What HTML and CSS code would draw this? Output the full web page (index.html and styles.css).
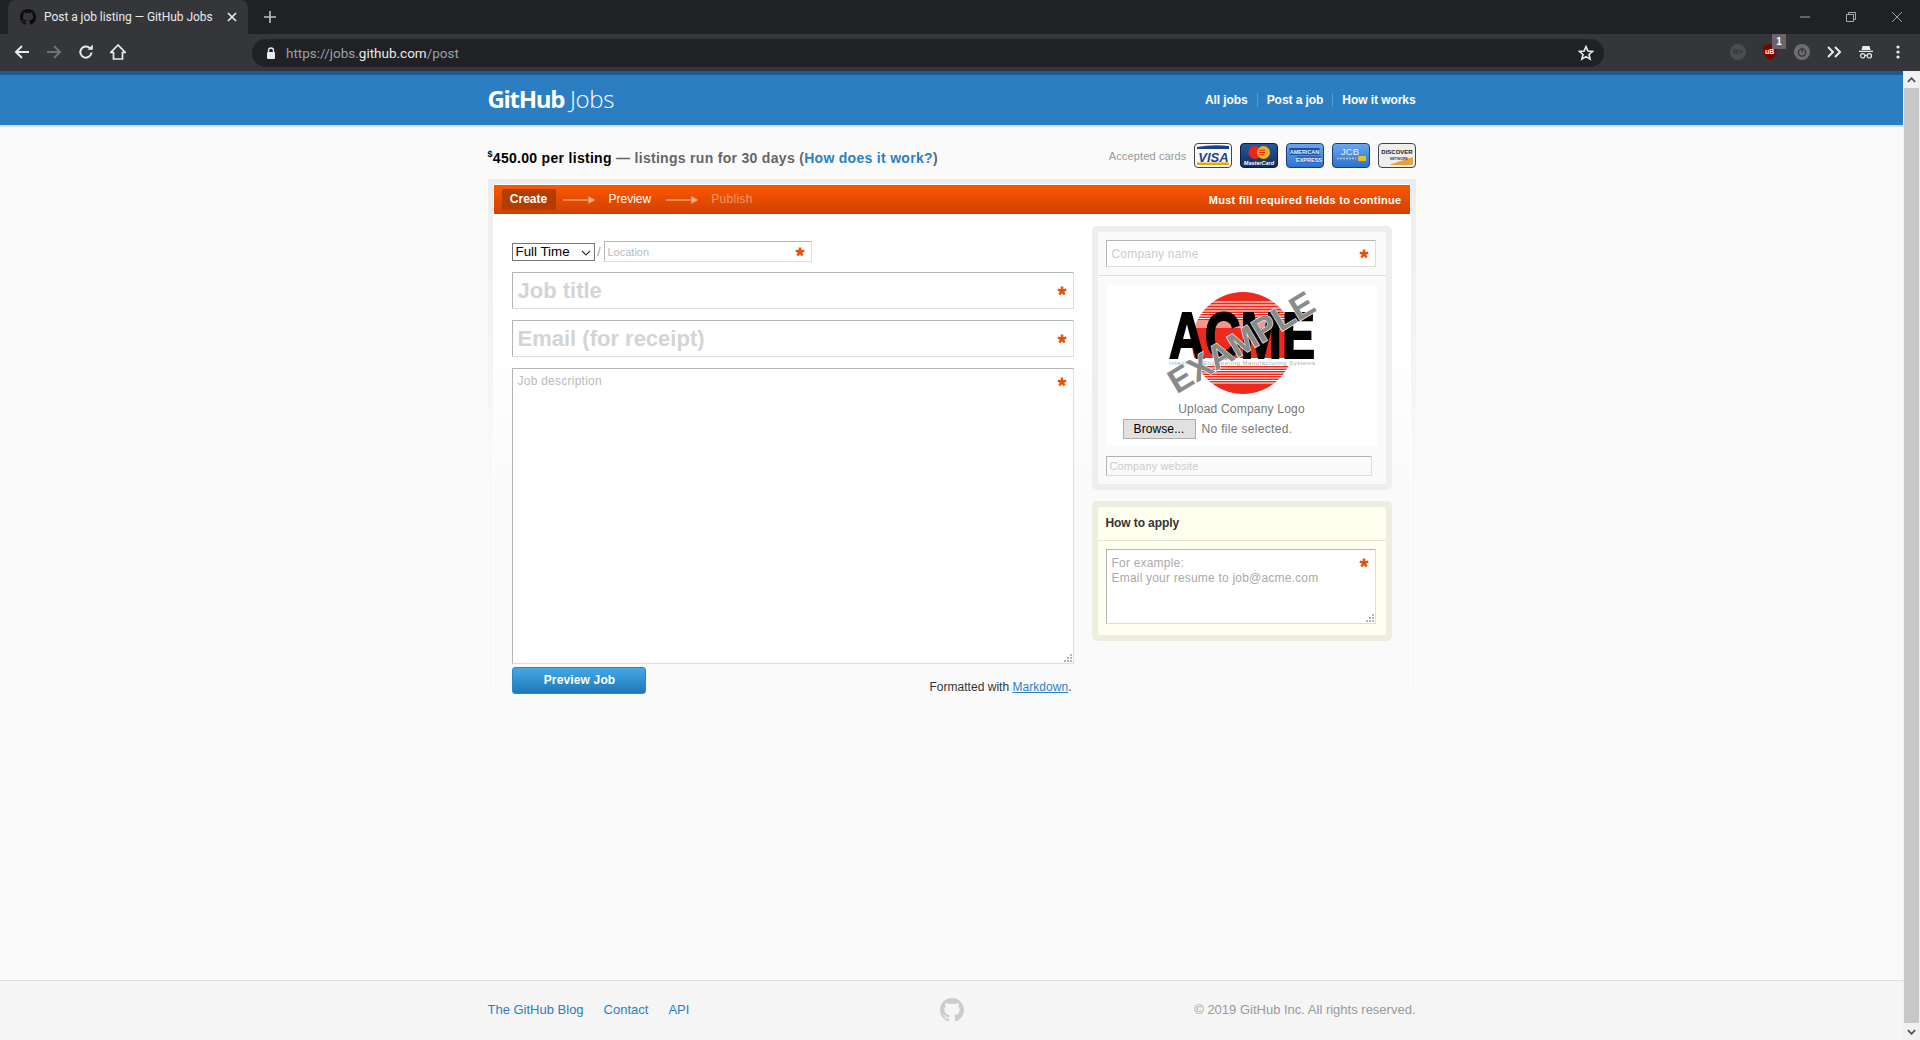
FILE: index.html
```html
<!DOCTYPE html>
<html lang="en">
<head>
<meta charset="utf-8">
<title>Post a job listing — GitHub Jobs</title>
<link rel="stylesheet" href="styles.css">
</head>
<body>
<svg class="defs" width="0" height="0">
  <defs>
    <symbol id="mark" viewBox="0 0 16 16"><path d="M8 0C3.58 0 0 3.58 0 8c0 3.54 2.29 6.53 5.47 7.59.4.07.55-.17.55-.38 0-.19-.01-.82-.01-1.49-2.01.37-2.53-.49-2.69-.94-.09-.23-.48-.94-.82-1.13-.28-.15-.68-.52-.01-.53.63-.01 1.08.58 1.23.82.72 1.21 1.87.87 2.33.66.07-.52.28-.87.51-1.07-1.78-.2-3.64-.89-3.64-3.95 0-.87.31-1.59.82-2.15-.08-.2-.36-1.02.08-2.12 0 0 .67-.21 2.2.82.64-.18 1.32-.27 2-.27.68 0 1.36.09 2 .27 1.53-1.04 2.2-.82 2.2-.82.44 1.1.16 1.92.08 2.12.51.56.82 1.27.82 2.15 0 3.07-1.87 3.75-3.65 3.95.29.25.54.73.54 1.48 0 1.07-.01 1.93-.01 2.2 0 .21.15.46.55.38A8.013 8.013 0 0016 8c0-4.42-3.58-8-8-8z" fill="currentColor"/></symbol>
    <symbol id="req" viewBox="0 0 10 10"><path d="M5 5V.6M5 5L9.2 3.6M5 5L7.6 8.6M5 5L2.4 8.6M5 5L.8 3.6" stroke="#e8500a" stroke-width="2.5" fill="none"/></symbol>
    <symbol id="flow" viewBox="0 0 32 8"><path d="M0 4h29M26 1.5L31 4l-5 2.5z" stroke="#fff" stroke-opacity=".35" stroke-width="2" fill="#fff" fill-opacity=".35"/></symbol>
    <symbol id="grip" viewBox="0 0 8 8"><path d="M6 0h2v2H6zM3 3h2v2H3zM6 3h2v2H6zM0 6h2v2H0zM3 6h2v2H3zM6 6h2v2H6z" fill="#b5b5b5"/></symbol>
    <linearGradient id="gBlue" x1="0" y1="0" x2="0" y2="1"><stop offset="0" stop-color="#6aa9ee"/><stop offset="1" stop-color="#2d6fd0"/></linearGradient>
    <linearGradient id="gNavy" x1="0" y1="0" x2="0" y2="1"><stop offset="0" stop-color="#2a5a9c"/><stop offset="1" stop-color="#0f2c5c"/></linearGradient>
  </defs>
</svg>

<div class="browser">
  <div class="tabstrip">
    <div class="tab">
      <svg class="tab-icon"><use href="#mark"/></svg>
      <span class="tab-title">Post a job listing — GitHub Jobs</span>
      <svg class="tab-close" viewBox="0 0 10 10"><path d="M1 1l8 8M9 1l-8 8" stroke="#e8eaed" stroke-width="1.7"/></svg>
    </div>
    <svg class="tab-new" viewBox="0 0 12 12"><path d="M6 0v12M0 6h12" stroke="#bdc1c6" stroke-width="1.6"/></svg>
    <div class="winctl">
      <svg viewBox="0 0 10 10"><path d="M0 5h10" stroke="#aaa"/></svg>
      <svg viewBox="0 0 10 10"><path d="M.5 2.5h7v7h-7zM2.5 2.5V.5h7v7h-2" stroke="#aaa" fill="none"/></svg>
      <svg viewBox="0 0 10 10"><path d="M0 0l10 10M10 0L0 10" stroke="#aaa" stroke-width=".9"/></svg>
    </div>
  </div>
  <div class="toolbar">
    <div class="navs">
      <svg viewBox="0 0 16 16"><path d="M15 8H2M8 2L2 8l6 6" stroke="#e8eaed" stroke-width="2" fill="none"/></svg>
      <svg viewBox="0 0 16 16"><path d="M1 8h13M8 2l6 6-6 6" stroke="#6f7174" stroke-width="2" fill="none"/></svg>
      <svg viewBox="0 0 16 16"><path d="M13.5 8.5A5.6 5.6 0 1 1 11.8 4" stroke="#e8eaed" stroke-width="2" fill="none"/><path d="M9.5 5.800h5.300V.6z" fill="#e8eaed"/></svg>
      <svg viewBox="0 0 16 16"><path d="M8 1L.8 8.500h2.700v6.500h9V8.500h2.700z" stroke="#e8eaed" stroke-width="1.700" fill="none" stroke-linejoin="miter"/></svg>
    </div>
    <div class="omnibox">
      <svg class="lock" viewBox="0 0 10 12"><path d="M2.5 5V3.500a2.500 2.500 0 0 1 5 0V5" stroke="#e8eaed" stroke-width="1.300" fill="none"/><rect x="1" y="5" width="8" height="7" rx="1" fill="#e8eaed"/></svg>
      <span class="url">https://jobs.<b>github.com</b>/post</span>
      <svg class="star" viewBox="0 0 16 16"><path d="M8 1.600l1.900 4.400 4.700.4-3.600 3.100 1.100 4.600L8 11.600l-4.100 2.500L5 9.500 1.400 6.400l4.700-.4z" stroke="#e8eaed" stroke-width="1.600" fill="none"/></svg>
    </div>
    <div class="exts">
      <span class="ext"><span class="bplus">B+</span></span>
      <span class="ext ext-ublock">
        <svg viewBox="0 0 14 16"><path d="M0 2l7-2 7 2c0 7-2 11-7 14C2 13 0 9 0 2z" fill="#800000"/></svg>
        <em>uB</em>
        <i class="ublock-badge">1</i>
      </span>
      <span class="ext">
        <svg viewBox="0 0 16 16"><circle cx="8" cy="8" r="8" fill="#6e6e6e"/><circle cx="8" cy="8.500" r="3.600" stroke="#35363a" stroke-width="1.400" fill="none"/><path d="M8 3.500v5" stroke="#35363a" stroke-width="1.400"/></svg>
      </span>
      <span class="ext">
        <svg class="ico-more" viewBox="0 0 14 12"><path d="M1 1l5 5-5 5M8 1l5 5-5 5" stroke="#e8eaed" stroke-width="2" fill="none"/></svg>
      </span>
      <span class="ext">
        <svg class="ico-incog" viewBox="0 0 14 14"><path d="M3.500 1h7l1 4h-9zM0 5.800h14v1.200H0z" fill="#e8eaed"/><circle cx="3.700" cy="10.800" r="2.200" stroke="#e8eaed" stroke-width="1.200" fill="none"/><circle cx="10.300" cy="10.800" r="2.200" stroke="#e8eaed" stroke-width="1.200" fill="none"/><path d="M5.900 10.500h2.200" stroke="#e8eaed"/></svg>
      </span>
      <span class="ext">
        <svg class="ico-menu" viewBox="0 0 4 14"><circle cx="2" cy="2" r="1.600" fill="#e8eaed"/><circle cx="2" cy="7" r="1.600" fill="#e8eaed"/><circle cx="2" cy="12" r="1.600" fill="#e8eaed"/></svg>
      </span>
    </div>
  </div>

  <div class="viewport">
    <div class="page">
      <header class="site-header">
        <div class="wrap header-row">
          <a class="logo"><b>GitHub</b> <span>Jobs</span></a>
          <nav class="site-nav"><a>All jobs</a><a>Post a job</a><a>How it works</a></nav>
        </div>
      </header>

      <main class="main wrap">
        <div class="price-row">
          <p class="price"><sup>$</sup><strong>450.00 per listing</strong> — listings run for 30 days (<a>How does it work?</a>)</p>
          <div class="cards">
            <span class="cards-label">Accepted cards</span>
            <svg class="card" viewBox="0 0 38 25"><rect x=".5" y=".5" width="37" height="24" rx="3.500" fill="#fafafa" stroke="#444"/><path d="M3 4q16-3 32-1v3H3z" fill="#1a3f8f"/><path d="M3 19.500h32v2.500H3z" fill="#e3a911"/><text x="19.500" y="18.500" class="t-visa">VISA</text></svg>
            <svg class="card" viewBox="0 0 38 25"><rect x=".5" y=".5" width="37" height="24" rx="3.500" fill="url(#gNavy)" stroke="#0b2144"/><circle cx="15" cy="9.500" r="6.500" fill="#e8261c"/><circle cx="23.500" cy="9.500" r="6.500" fill="#f2b01e"/><path d="M19 7.200h6M19 9.500h6M19 11.800h5" stroke="#e8261c"/><text x="19" y="21.500" class="t-mc">MasterCard</text></svg>
            <svg class="card" viewBox="0 0 38 25"><rect x=".5" y=".5" width="37" height="24" rx="3.500" fill="url(#gBlue)" stroke="#1c3f78"/><rect x="3.500" y="5" width="30" height="7" fill="#1d4fa8"/><rect x="11" y="13" width="24" height="7" fill="#2f68c4"/><text x="18.500" y="10.800" class="t-amex">AMERICAN</text><text x="23" y="18.800" class="t-amex">EXPRESS</text></svg>
            <svg class="card" viewBox="0 0 38 25"><rect x=".5" y=".5" width="37" height="24" rx="3.500" fill="url(#gBlue)" stroke="#1c3f78"/><text x="18" y="11.500" class="t-jcb">JCB</text><rect x="26" y="13" width="8" height="5" rx="1" fill="#e8c020"/><path d="M5 15.500h19" stroke="#a9cdf5" stroke-width="1.500" stroke-dasharray="2 1"/></svg>
            <svg class="card" viewBox="0 0 38 25"><rect x=".5" y=".5" width="37" height="24" rx="3.500" fill="#eee" stroke="#444"/><path d="M12 21.500L35 14v6a2 2 0 0 1-2 2H12z" fill="#e9a23a"/><text x="19" y="11" class="t-disc">DISCOVER</text><text x="21" y="17" class="t-net">NETWORK</text></svg>
          </div>
        </div>

        <div class="shell">
          <div class="panel">
            <div class="steps">
              <span class="step step-on">Create</span>
              <svg class="step-arrow"><use href="#flow"/></svg>
              <span class="step step-mid">Preview</span>
              <svg class="step-arrow"><use href="#flow"/></svg>
              <span class="step step-off">Publish</span>
              <span class="step-note">Must fill required fields to continue</span>
            </div>
            <form class="job-form">
              <div class="col-main">
                <div class="row-type">
                  <div class="select-wrap">
                    <select class="type-select"><option>Full Time</option></select>
                    <svg class="select-chevron" viewBox="0 0 10 6"><path d="M1 1l4 4 4-4" stroke="#333" stroke-width="1.100" fill="none"/></svg>
                  </div>
                  <span class="slash">/</span>
                  <div class="field field-loc">
                    <input class="input input-loc" placeholder="Location">
                    <svg class="req req-loc"><use href="#req"/></svg>
                  </div>
                </div>
                <div class="field">
                  <input class="input input-big" placeholder="Job title">
                  <svg class="req req-big"><use href="#req"/></svg>
                </div>
                <div class="field">
                  <input class="input input-big" placeholder="Email (for receipt)">
                  <svg class="req req-big"><use href="#req"/></svg>
                </div>
                <div class="field">
                  <textarea class="input input-desc" placeholder="Job description"></textarea>
                  <svg class="req req-big req-desc"><use href="#req"/></svg>
                  <svg class="grip"><use href="#grip"/></svg>
                </div>
                <div class="actions">
                  <button type="button" class="btn-primary">Preview Job</button>
                  <span class="md-note">Formatted with <a>Markdown</a>.</span>
                </div>
              </div>

              <aside class="col-side">
                <section class="box">
                  <div class="box-inner">
                    <div class="box-head">
                      <div class="field">
                        <input class="input input-company" placeholder="Company name">
                        <svg class="req req-side"><use href="#req"/></svg>
                      </div>
                    </div>
                    <div class="logo-panel">
                      <svg class="acme" viewBox="0 0 148 104">
                        <circle cx="75" cy="51" r="51" fill="#ee2a1e"/>
                        <path class="acme-cut" d="M20 10h110M20 13h110M20 16h110M20 19h110M20 21.500h110M20 24h110M20 26.500h110M20 29h110M20 31h110M20 33h110M20 35h110M20 76h110M20 78.500h110M20 81h110M20 83.500h110M20 86h110M20 88.500h110M20 91h110"/>
                        <rect x="0" y="66" width="148" height="8" fill="#fff"/>
                        <text x="74" y="66" class="acme-word" textLength="146" lengthAdjust="spacingAndGlyphs">ACME</text>
                        <text x="74" y="72.500" class="acme-small" textLength="146">Integrated Engineering Manufacturing Systems</text>
                        <text x="73" y="62" class="acme-stamp" transform="rotate(-31 73 50)">EXAMPLE</text>
                      </svg>
                      <div class="upload-title">Upload Company Logo</div>
                      <div class="upload-row">
                        <button type="button" class="btn-browse">Browse...</button>
                        <span class="upload-status">No file selected.</span>
                      </div>
                    </div>
                    <input class="input input-site" placeholder="Company website">
                  </div>
                </section>

                <section class="box box-apply">
                  <div class="box-inner box-inner-apply">
                    <h3 class="apply-title">How to apply</h3>
                    <div class="apply-body">
                      <div class="field">
                        <textarea class="input input-apply" placeholder="For example:&#10;Email your resume to job@acme.com"></textarea>
                        <svg class="req req-side"><use href="#req"/></svg>
                        <svg class="grip"><use href="#grip"/></svg>
                      </div>
                    </div>
                  </div>
                </section>
              </aside>
            </form>
          </div>
        </div>
      </main>

      <footer class="site-footer">
        <div class="wrap footer-row">
          <nav class="footer-nav"><a>The GitHub Blog</a><a>Contact</a><a>API</a></nav>
          <svg class="footer-mark"><use href="#mark"/></svg>
          <p class="copyright">© 2019 GitHub Inc. All rights reserved.</p>
        </div>
      </footer>
    </div>

    <div class="scrollbar">
      <span class="sb-btn"><svg viewBox="0 0 10 6"><path d="M1 5l4-4 4 4" stroke="#505050" stroke-width="2" fill="none"/></svg></span>
      <span class="sb-thumb"></span>
      <span class="sb-btn"><svg viewBox="0 0 10 6"><path d="M1 1l4 4 4-4" stroke="#505050" stroke-width="2" fill="none"/></svg></span>
    </div>
  </div>
</div>
</body>
</html>
```

FILE: styles.css
```css
* { box-sizing: border-box; }
html, body { margin: 0; height: 100%; overflow: hidden; }
body { font-family: "Liberation Sans", Arial, sans-serif; font-size: 12px; color: #333; }
p, h3 { margin: 0; }
.defs { display: block; height: 0; }

.browser { height: 1040px; display: flex; flex-direction: column; }

/* Browser chrome */
.tabstrip { height: 34px; flex: none; background: #202124; display: flex; align-items: flex-end; position: relative; }
.tab { width: 240px; height: 34px; margin-left: 8px; background: #35363a; border-radius: 8px 8px 0 0; display: flex; align-items: center; padding: 0 12px; color: #e8eaed; font: 12px Roboto, sans-serif; }
.tab-icon { width: 16px; height: 16px; color: #0c0c0d; flex: none; }
.tab-title { margin-left: 8px; flex: 1; white-space: nowrap; letter-spacing: -.05px; }
.tab-close { width: 10px; height: 10px; flex: none; margin-right: -1px; }
.tab-new { width: 12px; height: 12px; margin: 0 0 11px 16px; flex: none; }
.winctl { margin-left: auto; height: 34px; display: flex; align-items: center; gap: 36px; padding-right: 18px; }
.winctl svg { width: 10px; height: 10px; }

.toolbar { height: 37px; flex: none; background: #35363a; display: flex; align-items: center; padding-bottom: 3px; padding-top: 3px; }
.navs { display: flex; width: 252px; padding-left: 14px; gap: 16px; margin-top: -1px; }
.navs svg { width: 16px; height: 16px; }
.omnibox { width: 1352px; height: 28px; background: #202124; border-radius: 14px; display: flex; align-items: center; padding: 0 10px 0 14px; }
.lock { width: 10px; height: 12px; flex: none; }
.url { margin-left: 10px; flex: 1; color: #9aa0a6; font: 13.500px Roboto, sans-serif; }
.url b { color: #e8eaed; font-weight: 400; }
.star { width: 16px; height: 16px; }
.exts { flex: 1; display: flex; align-items: center; padding-left: 118px; margin-top: -1px; }
.ext { width: 32px; height: 16px; display: flex; align-items: center; justify-content: center; position: relative; }
.ext svg { height: 16px; width: 16px; }
.ext .ico-more { height: 12px; }
.ext .ico-incog { width: 14px; height: 14px; }
.ext .ico-menu { height: 14px; }
.bplus { width: 16px; height: 16px; border-radius: 50%; background: #4c4d50; color: #35363a; font-size: 8px; font-weight: 700; line-height: 16px; text-align: center; }
.ext-ublock em { position: absolute; left: 11px; top: 4px; color: #fff; font-size: 7px; font-weight: 700; font-style: normal; }
.ublock-badge { position: absolute; left: 18px; top: -10px; width: 14px; height: 15px; background: #666; color: #fff; font: 700 10px/15px "Liberation Sans", sans-serif; text-align: center; }

/* Viewport */
.viewport { flex: 1; min-height: 0; display: flex; }
.page { flex: 1; min-width: 0; display: flex; flex-direction: column; background: #fafafa; }
.wrap { width: 928px; margin-left: auto; margin-right: auto; }

.scrollbar { width: 17px; flex: none; background: #f1f1f1; display: flex; flex-direction: column; }
.sb-btn { height: 17px; flex: none; display: flex; align-items: center; justify-content: center; }
.sb-btn svg { width: 9px; height: 6px; }
.sb-thumb { flex: 1; background: #c8c8c8; margin: 0 1px; }

/* Site header */
.site-header { height: 56px; flex: none; background: #2b7ec2; border-top: 4px solid #1d5a8e; border-bottom: 2px solid #ddd; }
.header-row { height: 50px; display: flex; align-items: center; justify-content: space-between; }
.logo { color: #fff; font: 24px/1 "Open Sans", sans-serif; letter-spacing: -1.300px; white-space: nowrap; margin-top: -2px; }
.logo b { font-weight: 700; }
.logo span { font-weight: 300; letter-spacing: -.4px; margin-left: 1px; }
.site-nav { display: flex; }
.site-nav a { color: #fff; font-weight: 700; font-size: 12px; line-height: 14px; padding: 0 9px; border-left: 1px solid rgba(255,255,255,.22); letter-spacing: -.07px; }
.site-nav a:first-child { border-left: 0; }
.site-nav a:last-child { padding-right: 0; }

/* Price row */
.main { flex: 1; }
.price-row { height: 52px; padding-top: 16px; display: flex; justify-content: space-between; align-items: flex-start; }
.price { font-size: 14px; font-weight: 700; color: #666; line-height: 16px; margin-top: 7px; letter-spacing: .3px; }
.price strong { color: #000; }
.price sup { font-size: 9px; color: #000; line-height: 0; }
.price a { color: #2a7fc4; }
.cards { display: flex; align-items: center; gap: 8px; }
.cards-label { color: #999; font-size: 11px; margin-right: -1px; letter-spacing: .14px; }
.card { width: 38px; height: 25px; display: block; }
.t-visa { font: italic 700 13px "Liberation Sans", sans-serif; fill: #1a3f8f; text-anchor: middle; }
.t-mc { font: italic 700 5.500px "Liberation Sans", sans-serif; fill: #fff; text-anchor: middle; }
.t-amex { font: 700 5.500px "Liberation Sans", sans-serif; fill: #e6f0ff; text-anchor: middle; }
.t-jcb { font: 400 9.500px "Liberation Sans", sans-serif; fill: #e6f0ff; text-anchor: middle; }
.t-disc { font: 700 6px "Liberation Sans", sans-serif; fill: #222; text-anchor: middle; }
.t-net { font: 700 3.500px "Liberation Sans", sans-serif; fill: #444; text-anchor: middle; }

/* Form shell */
.shell { padding: 5px 5px 0; background: linear-gradient(#ececec 0, #f4f4f4 180px, #fafafa 300px); }
.panel { border: 1px solid #fff; border-bottom: 0; background: linear-gradient(#fff 0, #fff 150px, #fafafa 300px); }
.steps { height: 29px; display: flex; align-items: center; padding: 0 8px; background: linear-gradient(#f95800, #d24000); color: #fff; font-size: 12px; }
.step { line-height: 21px; }
.step-on { width: 54px; text-align: center; background: #b33c00; border-radius: 2px; font-weight: 700; }
.step-mid { margin-right: 0; }
.step-off { opacity: .4; letter-spacing: .3px; margin-left: -1px; }
.step-arrow { width: 32px; height: 8px; margin: 0 14px 0 7px; flex: none; }
.step-mid + .step-arrow { margin-left: 15px; }
.step-note { margin-left: auto; font-size: 11px; font-weight: 700; letter-spacing: .27px; }

.job-form { display: grid; grid-template-columns: 562px 300px; column-gap: 18px; padding: 12px 0 0 18px; }
.col-main { padding-top: 15px; display: flex; flex-direction: column; gap: 11px; }
.row-type { display: flex; align-items: center; height: 21px; margin-bottom: -1px; }
.select-wrap { width: 83px; height: 18px; position: relative; flex: none; }
.type-select { display: block; width: 100%; height: 18px; appearance: none; -webkit-appearance: none; font: 13.333px/16px "Liberation Sans", sans-serif; background: #fff; color: #000; border: 1px solid #767676; border-radius: 0; padding: 0 0 0 3px; }
.select-chevron { position: absolute; right: 4px; top: 7px; width: 10px; height: 6px; }
.slash { width: 9px; text-align: center; color: #999; }
.field { position: relative; }
.field-loc { width: 208px; }
.input { display: block; width: 100%; background: #fff; border: 1px solid; border-color: #b5b5b5 #ddd #ddd #b5b5b5; border-radius: 0; outline: 0; font-family: "Liberation Sans", sans-serif; margin: 0; resize: none; }
.input::placeholder { color: #bbb; opacity: 1; }
.input-loc { height: 21px; font-size: 11px; padding: 0 3px; }
.input-big { height: 37px; font-size: 22px; font-weight: 700; padding: 1px 5px 0; }
.input-big::placeholder { color: #d4d4d4; }
.input-desc { height: 296px; font-size: 12px; padding: 5px 4px 5px 5px; letter-spacing: .25px; }
.req { position: absolute; width: 10px; height: 10px; }
.req-loc { right: 7px; top: 6px; }
.req-big { right: 7px; top: 14px; }
.req-big.req-desc { top: 9px; }
.req-side { right: 7px; top: 9px; }
.grip { position: absolute; right: 2px; bottom: 2px; width: 8px; height: 8px; }

.actions { display: flex; justify-content: space-between; align-items: flex-end; margin-top: -8px; }
.btn-primary { width: 134px; height: 27px; padding: 0 0 2px 2px; border: 1px solid #2a86c6; border-radius: 3px; background: linear-gradient(#45a8e8, #1d79b8); color: #fff; font: 700 12px "Liberation Sans", sans-serif; letter-spacing: .15px; }
.md-note { font-size: 12px; line-height: 14px; color: #333; padding-right: 2px; letter-spacing: .03px; }
.md-note a { color: #2a7fc4; text-decoration: underline; }

/* Side boxes */
.col-side { display: flex; flex-direction: column; gap: 11px; }
.box { padding: 6px; background: #eee; border-radius: 5px; }
.box-inner { background: #fafafa; border-radius: 3px; height: 252px; padding-top: 8px; }
.box-head { padding: 0 10px 8px 8px; border-bottom: 1px solid #ddd; }
.input-company { height: 27px; font-size: 12px; padding: 0 5px; letter-spacing: .2px; }
.input-company::placeholder { color: #ccc; }
.logo-panel { width: 270px; height: 161px; margin: 9px 0 0 9px; background: #fff; border-radius: 2px; padding-top: 7px; text-align: center; }
.acme { display: block; width: 148px; height: 104px; margin: 0 auto; overflow: visible; }
.acme-cut { stroke: #fff; stroke-width: 1px; fill: none; }
.acme-word { font: 700 64px "Liberation Sans", sans-serif; fill: #000; stroke: #000; stroke-width: 2px; text-anchor: middle; }
.acme-small { font: 400 6px "Liberation Sans", sans-serif; fill: #aaa; text-anchor: middle; }
.acme-stamp { font: 700 34px "Liberation Sans", sans-serif; fill: #8a8a8a; stroke: #fff; stroke-width: 1.200px; paint-order: stroke; text-anchor: middle; }
.upload-title { color: #777; font-size: 12px; line-height: 14px; margin-top: 6px; letter-spacing: .2px; }
.upload-row { display: flex; align-items: center; padding: 3px 0 0 16px; }
.btn-browse { width: 73px; height: 20px; padding: 0; background: #e1e1e1; border: 1px solid #adadad; color: #000; font: 12px "Liberation Sans", sans-serif; letter-spacing: .1px; }
.upload-status { margin-left: 6px; color: #777; font-size: 12px; letter-spacing: .32px; }
.input-site { width: 266px; height: 20px; margin: 10px 0 0 8px; background: #fafafa; font-size: 11px; padding: 0 3px; letter-spacing: .1px; }
.input-site::placeholder { color: #ccc; }

.box-apply { background: #eeeee0; }
.box-inner-apply { height: 128px; background: #fffff0; padding: 0; }
.apply-title { height: 34px; line-height: 32px; padding-left: 8px; font-size: 12px; font-weight: 700; color: #333; border-bottom: 1px solid #e5e5d5; letter-spacing: -.1px; }
.apply-body { padding: 8px 10px 0 8px; }
.input-apply { height: 75px; font-size: 12px; line-height: 15px; padding: 6px 5px; letter-spacing: .2px; }
.input-apply::placeholder { color: #aaa; }

/* Footer */
.site-footer { height: 60px; flex: none; background: #f5f5f5; border-top: 1px solid #ddd; }
.footer-row { height: 59px; padding-bottom: 2px; display: grid; grid-template-columns: 1fr auto 1fr; align-items: center; }
.footer-nav { display: flex; gap: 20px; }
.footer-nav a { color: #2a7fc4; font-size: 13px; }
.footer-mark { width: 24px; height: 24px; color: #ccc; }
.copyright { text-align: right; color: #999; font-size: 13px; }
```
